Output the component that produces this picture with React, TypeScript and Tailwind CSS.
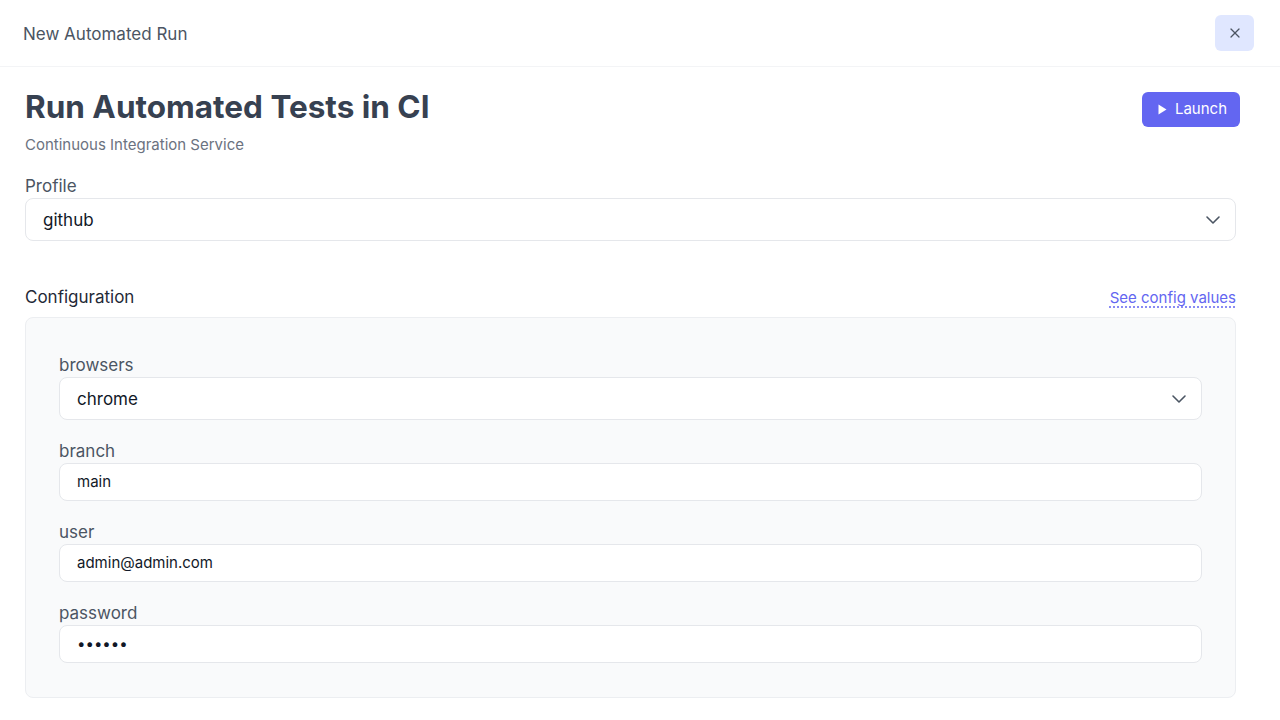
import { ChevronDown, X } from "lucide-react";

const font = { fontFamily: "Inter, 'Noto Sans', sans-serif" };

function Field({ label, children }: { label: string; children: React.ReactNode }) {
  return (
    <div className="flex flex-col">
      <label className="text-[17px] leading-[24px] text-[#4b5563]">{label}</label>
      {children}
    </div>
  );
}

function TextBox({ value }: { value: string }) {
  return (
    <div className="flex h-[38px] items-center rounded-lg border border-[#e5e7eb] bg-white px-[17px] pt-[1px] text-[15px] text-[#111827]">
      {value}
    </div>
  );
}

function SelectBox({ value }: { value: string }) {
  return (
    <div className="flex h-[43px] items-center justify-between rounded-lg border border-[#e5e7eb] bg-white pl-[17px] pr-[10px] text-[17px] text-[#111827]">
      <span className="pt-[2px]">{value}</span>
      <ChevronDown className="h-6 w-6 text-[#4b5563]" strokeWidth={1.6} />
    </div>
  );
}

export default function App() {
  return (
    <div className="min-h-screen bg-white" style={font}>
      {/* Header */}
      <header className="flex h-[67px] items-center justify-between border-b border-[#f3f4f6] pl-[23px] pr-[26px]">
        <h2 className="pt-[4px] text-[17px] text-[#4b5563]">New Automated Run</h2>
        <button className="flex h-[36px] w-[39px] items-center justify-center rounded-md bg-[#e0e7ff] text-[#4b5563]">
          <X className="h-4 w-4" strokeWidth={1.8} />
        </button>
      </header>

      <main className="px-[25px]">
        <div className="flex w-[1215px] items-start justify-between pt-[20px]">
          <div>
            <h1 className="text-[31.5px] font-bold leading-[40px] text-[#374151]">Run Automated Tests in CI</h1>
            <p className="mt-[7px] text-[15px] leading-[22px] text-[#6b7280]">Continuous Integration Service</p>
          </div>
          <button className="mt-[5px] flex h-[35px] items-center gap-[8px] rounded-md bg-[#6366f1] pl-[16px] pr-[13px] text-[15px] text-white">
            <svg width="9" height="11" viewBox="0 0 9 11" fill="currentColor">
              <path d="M0.5 0.5 L8.5 5.5 L0.5 10.5 Z" />
            </svg>
            Launch
          </button>
        </div>

        <div className="mt-[18px] w-[1211px]">
          <Field label="Profile">
            <SelectBox value="github" />
          </Field>
        </div>

        <div className="mt-[44px] flex w-[1211px] items-end justify-between">
          <span className="text-[17px] leading-[24px] text-[#1f2937]">Configuration</span>
          <a className="text-[15px] leading-[22px] text-[#6366f1] underline decoration-dotted underline-offset-4">
            See config values
          </a>
        </div>

        <div className="mt-[8px] flex w-[1211px] flex-col gap-[19px] rounded-lg border border-[#eceef1] bg-[#f9fafb] px-[33px] pb-[34px] pt-[35px]">
          <Field label="browsers">
            <SelectBox value="chrome" />
          </Field>
          <Field label="branch">
            <TextBox value="main" />
          </Field>
          <Field label="user">
            <TextBox value="admin@admin.com" />
          </Field>
          <Field label="password">
            <TextBox value="••••••" />
          </Field>
        </div>
      </main>
    </div>
  );
}
